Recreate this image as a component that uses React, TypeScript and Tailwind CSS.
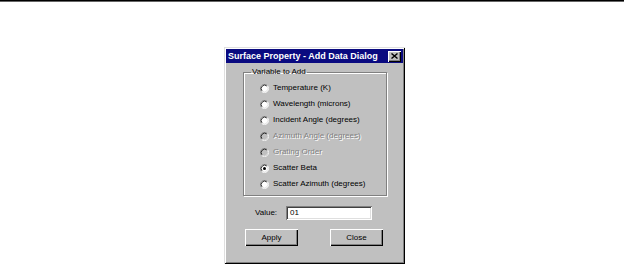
const options = [
  { label: "Temperature (K)", disabled: false, checked: false },
  { label: "Wavelength (microns)", disabled: false, checked: false },
  { label: "Incident Angle (degrees)", disabled: false, checked: false },
  { label: "Azimuth Angle (degrees)", disabled: true, checked: false },
  { label: "Grating Order", disabled: true, checked: false },
  { label: "Scatter Beta", disabled: false, checked: true },
  { label: "Scatter Azimuth (degrees)", disabled: false, checked: false },
]

function Radio({ checked, disabled }: { checked: boolean; disabled: boolean }) {
  return (
    <svg width="9" height="9" viewBox="0 0 12 12" className="shrink-0">
      <circle cx="6" cy="6" r="5" fill={disabled ? "#c0c0c0" : "#fff"} />
      <path d="M2.11 9.89 A5.5 5.5 0 0 1 9.89 2.11" fill="none" stroke="#808080" strokeWidth="1" />
      <path d="M9.89 2.11 A5.5 5.5 0 0 1 2.11 9.89" fill="none" stroke="#fff" strokeWidth="1" />
      <path d="M2.82 9.18 A4.5 4.5 0 0 1 9.18 2.82" fill="none" stroke="#000" strokeWidth="1" />
      <path d="M9.18 2.82 A4.5 4.5 0 0 1 2.82 9.18" fill="none" stroke="#dfdfdf" strokeWidth="1" />
      {checked && <circle cx="6" cy="6" r="2" fill="#000" />}
    </svg>
  )
}

export default function App() {
  return (
    <div className="w-[624px] h-[265px] bg-white font-['Liberation_Sans',Arial,sans-serif] overflow-hidden">
      <div className="h-[1px] bg-black" />
      <div className="h-[1px] bg-[#666]" />

      <div className="ml-[224px] mt-[45px] w-[181px] h-[217px] bg-[#c0c0c0] p-[2px] shadow-[inset_1px_1px_#dfdfdf,inset_-1px_-1px_#000,inset_2px_2px_#fff,inset_-2px_-2px_#808080] flex flex-col">
        {/* title bar */}
        <div className="h-[14px] bg-[#0a0a80] flex items-center justify-between pl-[2px] pr-[2px]">
          <span className="text-white font-bold text-[9px] leading-none whitespace-nowrap">Surface Property - Add Data Dialog</span>
          <div className="w-[13px] h-[11px] bg-[#c0c0c0] flex items-center justify-center shadow-[inset_1px_1px_#fff,inset_-1px_-1px_#000,inset_-2px_-2px_#808080]">
            <svg width="7" height="6" viewBox="0 0 7 6">
              <path d="M0.5 0.5 L6.5 5.5 M6.5 0.5 L0.5 5.5" stroke="#000" strokeWidth="1.4" />
            </svg>
          </div>
        </div>

        {/* group box */}
        <fieldset className="ml-[17px] mt-[4px] w-[144px] border border-[#808080] shadow-[inset_1px_1px_#fff,1px_1px_#fff] pt-[3px] pb-[3px]">
          <legend className="ml-[7px] px-[1px] text-[8px] leading-[10px] text-black">Variable to Add</legend>
          <div className="flex flex-col">
            {options.map((o) => (
              <div key={o.label} className="h-[16px] flex items-center gap-[4px] pl-[16px]">
                <Radio checked={o.checked} disabled={o.disabled} />
                <span
                  className={
                    o.disabled
                      ? "text-[8px] leading-none text-[#808080] [text-shadow:1px_1px_0_#fff] whitespace-nowrap"
                      : "text-[8px] leading-none text-black whitespace-nowrap"
                  }
                >
                  {o.label}
                </span>
              </div>
            ))}
          </div>
        </fieldset>

        {/* value row */}
        <div className="mt-[10px] flex items-center pl-[29px]">
          <span className="text-[8px] leading-none w-[31px]">Value:</span>
          <div className="w-[86px] h-[14px] bg-white flex items-center pl-[4px] shadow-[inset_1px_1px_#808080,inset_-1px_-1px_#fff,inset_2px_2px_#404040,inset_-2px_-2px_#dfdfdf]">
            <span className="text-[8px] leading-none">01</span>
          </div>
        </div>

        {/* buttons */}
        <div className="mt-[9px] flex pl-[19px] gap-[32px]">
          <button className="w-[53px] h-[17px] bg-[#c0c0c0] text-[8px] leading-none flex items-center justify-center shadow-[inset_1px_1px_#fff,inset_-1px_-1px_#000,inset_-2px_-2px_#808080]">
            Apply
          </button>
          <button className="w-[53px] h-[17px] bg-[#c0c0c0] text-[8px] leading-none flex items-center justify-center shadow-[inset_1px_1px_#fff,inset_-1px_-1px_#000,inset_-2px_-2px_#808080]">
            Close
          </button>
        </div>
      </div>
    </div>
  )
}
